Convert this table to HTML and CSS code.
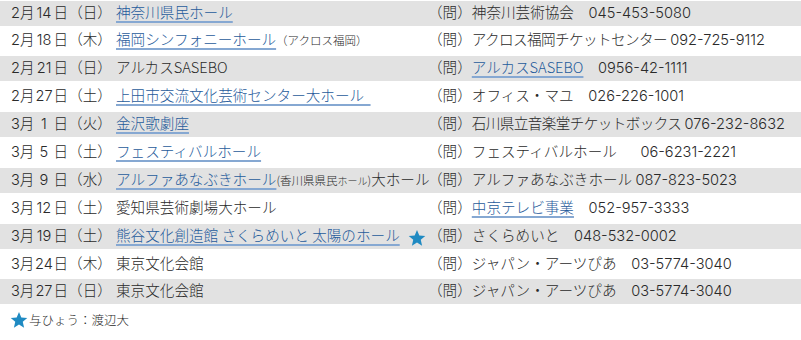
FILE: index.html
```html
<!DOCTYPE html>
<html lang="ja">
<head>
<meta charset="utf-8">
<title>公演スケジュール</title>
<link rel="stylesheet" href="styles.css">
</head>
<body>
<div class="list">
  <div class="row alt">
    <div class="date"><span class="num">2</span>月<span class="num day">14</span>日（日）</div>
    <div class="venue"><a href="#">神奈川県民ホール</a></div>
    <div class="info">（問）神奈川芸術協会　<span class="num">045-453-5080</span></div>
  </div>
  <div class="row">
    <div class="date"><span class="num">2</span>月<span class="num day">18</span>日（木）</div>
    <div class="venue"><a href="#">福岡シンフォニーホール</a><span class="small">（アクロス福岡）</span></div>
    <div class="info">（問）<span class="tight">アクロス福岡チケットセンター</span> <span class="num">092-725-9112</span></div>
  </div>
  <div class="row alt">
    <div class="date"><span class="num">2</span>月<span class="num day">21</span>日（日）</div>
    <div class="venue">アルカスSASEBO</div>
    <div class="info">（問）<a href="#">アルカスSASEBO</a>　<span class="num">0956-42-1111</span></div>
  </div>
  <div class="row">
    <div class="date"><span class="num">2</span>月<span class="num day">27</span>日（土）</div>
    <div class="venue"><a href="#">上田市交流文化芸術センター大ホール&nbsp;&nbsp;</a></div>
    <div class="info">（問）オフィス・マユ　<span class="num">026-226-1001</span></div>
  </div>
  <div class="row alt">
    <div class="date"><span class="num">3</span>月<span class="num day">1</span>日（火）</div>
    <div class="venue"><a href="#">金沢歌劇座</a></div>
    <div class="info">（問）<span class="tight">石川県立音楽堂チケットボックス</span> <span class="num">076-232-8632</span></div>
  </div>
  <div class="row">
    <div class="date"><span class="num">3</span>月<span class="num day">5</span>日（土）</div>
    <div class="venue"><a href="#">フェスティバルホール</a></div>
    <div class="info">（問）フェスティバルホール　<span class="num wide">06-6231-2221</span></div>
  </div>
  <div class="row alt">
    <div class="date"><span class="num">3</span>月<span class="num day">9</span>日（水）</div>
    <div class="venue"><a href="#">アルファあなぶきホール</a><span class="small">(香川県県民<span class="smaller">ホール</span>)</span>大ホール</div>
    <div class="info">（問）アルファあなぶきホール <span class="num">087-823-5023</span></div>
  </div>
  <div class="row">
    <div class="date"><span class="num">3</span>月<span class="num day">12</span>日（土）</div>
    <div class="venue">愛知県芸術劇場大ホール</div>
    <div class="info">（問）<a href="#">中京テレビ事業</a>　<span class="num">052-957-3333</span></div>
  </div>
  <div class="row alt">
    <div class="date"><span class="num">3</span>月<span class="num day">19</span>日（土）</div>
    <div class="venue"><a href="#">熊谷文化創造館 さくらめいと 太陽のホール</a><svg class="star" viewBox="0 0 24 24" aria-hidden="true"><path d="M12 1.2l3.1 7.3 7.9.7-6 5.2 1.8 7.8L12 18.1l-6.8 4.1L7 14.4 1 9.2l7.9-.7z"/></svg></div>
    <div class="info">（問）さくらめいと　<span class="num">048-532-0002</span></div>
  </div>
  <div class="row">
    <div class="date"><span class="num">3</span>月<span class="num day">24</span>日（木）</div>
    <div class="venue">東京文化会館</div>
    <div class="info">（問）ジャパン・アーツぴあ　<span class="num">03-5774-3040</span></div>
  </div>
  <div class="row alt">
    <div class="date"><span class="num">3</span>月<span class="num day">27</span>日（日）</div>
    <div class="venue">東京文化会館</div>
    <div class="info">（問）ジャパン・アーツぴあ　<span class="num">03-5774-3040</span></div>
  </div>
</div>
<p class="legend"><svg class="star" viewBox="0 0 24 24" aria-hidden="true"><path d="M12 1.2l3.1 7.3 7.9.7-6 5.2 1.8 7.8L12 18.1l-6.8 4.1L7 14.4 1 9.2l7.9-.7z"/></svg>与ひょう：渡辺大</p>
</body>
</html>
```
FILE: styles.css
```css
html, body {
  margin: 0;
  padding: 0;
  background: #fff;
}

body {
  font-family: "Noto Sans CJK JP", "Noto Sans", sans-serif;
  font-size: 14.6px;
  font-weight: 300;
  color: #2a2a2a;
}

.list {
  display: flex;
  flex-direction: column;
  gap: 2.9px;
  padding-top: 0.5px;
}

.row {
  display: grid;
  grid-template-columns: 105px 312px 1fr;
  height: 25px;
  line-height: 22px;
  padding-left: 11px;
  white-space: nowrap;
}

.row.alt {
  background: #e2e2e2;
}

.num {
  font-family: "Inter", "DejaVu Sans", sans-serif;
  font-weight: 300;
}

.num.wide {
  margin-left: 9px;
}

.tight {
  letter-spacing: -0.6px;
}

.day {
  display: inline-block;
  width: 19px;
  text-align: center;
}

.venue {
  display: flex;
  align-items: baseline;
}

a {
  color: #1f5b9b;
  text-decoration: underline;
  text-decoration-color: #86a8d2;
  text-decoration-thickness: 1.5px;
  text-underline-offset: 3px;
}

.small {
  font-size: 11.5px;
}

.smaller {
  font-size: 10px;
}

.star {
  width: 18px;
  height: 18px;
  fill: #1f8ac2;
  align-self: center;
  margin-left: 8px;
  margin-top: 3px;
}

.legend {
  display: flex;
  align-items: center;
  margin: 7px 0 0 10px;
  font-size: 12.5px;
  line-height: 18px;
}

.legend .star {
  margin: 0 1px 0 0;
}
```
